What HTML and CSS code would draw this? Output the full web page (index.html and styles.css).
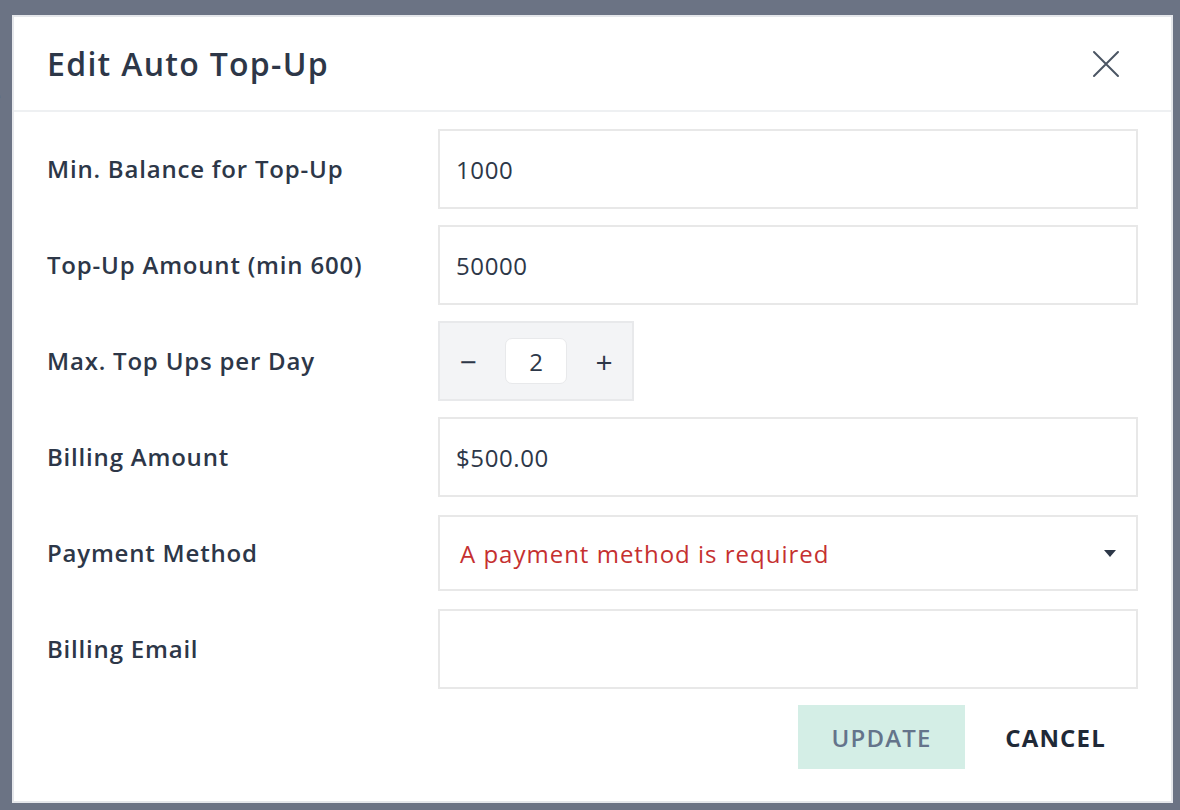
FILE: index.html
```html
<!DOCTYPE html>
<html lang="en">
<head>
<meta charset="UTF-8">
<title>Edit Auto Top-Up</title>
<link rel="stylesheet" href="styles.css">
</head>
<body>

<div class="page-behind">
    <span class="behind-text">Usage</span>
</div>

<div class="overlay">
    <div class="modal">
        <div class="modal-header">
            <h2 class="modal-title">Edit Auto Top-Up</h2>
            <button class="close-button" aria-label="Close">
                <svg width="28" height="28" viewBox="0 0 28 28">
                    <path d="M2 2 L26 26 M26 2 L2 26" stroke="#4b5563" stroke-width="2" stroke-linecap="round" fill="none"/>
                </svg>
            </button>
        </div>

        <form class="modal-body">
            <label class="field-label" for="minBalance">Min. Balance for Top-Up</label>
            <input class="text-input" type="text" id="minBalance" value="1000">

            <label class="field-label" for="topUpAmount">Top-Up Amount (min 600)</label>
            <input class="text-input" type="text" id="topUpAmount" value="50000">

            <label class="field-label" for="maxTopUps">Max. Top Ups per Day</label>
            <div class="stepper">
                <button type="button" class="stepper-button">&minus;</button>
                <input class="stepper-value" type="text" id="maxTopUps" value="2">
                <button type="button" class="stepper-button">+</button>
            </div>

            <label class="field-label" for="billingAmount">Billing Amount</label>
            <input class="text-input" type="text" id="billingAmount" value="$500.00">

            <label class="field-label" for="paymentMethod">Payment Method</label>
            <div class="select-box" id="paymentMethod">
                <span class="select-error">A payment method is required</span>
                <svg class="select-arrow" width="12" height="7" viewBox="0 0 12 7">
                    <path d="M0 0 H12 L6 7 Z" fill="#2d3748"/>
                </svg>
            </div>

            <label class="field-label" for="billingEmail">Billing Email</label>
            <input class="text-input" type="text" id="billingEmail" value="">
        </form>

        <div class="modal-footer">
            <button class="update-button" disabled>UPDATE</button>
            <button class="cancel-button">CANCEL</button>
        </div>
    </div>
</div>

</body>
</html>
```

FILE: styles.css
```css
body {
    margin: 0;
    font-family: "Open Sans", "Noto Sans", Arial, sans-serif;
    color: #2d3748;
    background-color: #6b7384;
    width: 1180px;
    height: 810px;
    overflow: hidden;
    position: relative;
}

.page-behind {
    position: absolute;
    left: -62px;
    top: 80px;
}

.behind-text {
    font-size: 22px;
    color: #4c5466;
}

.overlay {
    position: absolute;
    inset: 0;
    padding: 15px 0 0 12px;
}

.modal {
    width: 1161px;
    height: 788px;
    box-sizing: border-box;
    background: white;
    border: 2px solid #e5e7eb;
    display: flex;
    flex-direction: column;
}

.modal-header {
    height: 95px;
    box-sizing: border-box;
    border-bottom: 2px solid #eef0f2;
    display: flex;
    align-items: center;
    justify-content: space-between;
    padding: 0 51px 0 33px;
}

.modal-title {
    margin: 0;
    font-size: 32px;
    font-weight: 600;
    color: #2d3748;
    letter-spacing: 1.3px;
}

.close-button {
    background: none;
    border: none;
    padding: 0;
    width: 28px;
    height: 28px;
    cursor: pointer;
}

.modal-body {
    display: grid;
    grid-template-columns: 391px 700px;
    row-gap: 16px;
    padding: 17px 33px 0 33px;
    align-items: center;
}

.field-label {
    font-size: 24px;
    font-weight: 600;
    color: #2d3748;
    letter-spacing: 0.8px;
    padding-bottom: 2px;
}

.text-input {
    height: 80px;
    box-sizing: border-box;
    border: 2px solid #e8e8e8;
    padding: 0 16px;
    font-family: inherit;
    font-size: 24px;
    color: #2d3748;
    letter-spacing: 0.6px;
    outline: none;
}

.stepper {
    width: 196px;
    height: 80px;
    box-sizing: border-box;
    background-color: #f3f4f6;
    border: 2px solid #e8e9eb;
    display: flex;
    align-items: center;
    justify-content: space-between;
    padding: 0 12px;
}

.stepper-button {
    width: 32px;
    height: 40px;
    border: none;
    background: none;
    font-family: inherit;
    font-size: 30px;
    color: #2d3748;
    cursor: pointer;
    padding: 0;
}

.stepper-value {
    width: 62px;
    height: 46px;
    box-sizing: border-box;
    border: 1px solid #e8e9eb;
    border-radius: 7px;
    background: white;
    text-align: center;
    font-family: inherit;
    font-size: 24px;
    color: #2d3748;
    outline: none;
}

.select-box {
    height: 76px;
    margin: 2px 0;
    box-sizing: border-box;
    border: 2px solid #e8e8e8;
    padding: 0 20px 0 20px;
    display: flex;
    align-items: center;
    justify-content: space-between;
}

.select-error {
    font-size: 24px;
    color: #c53030;
    letter-spacing: 1px;
}

.modal-footer {
    display: flex;
    justify-content: flex-end;
    gap: 8px;
    padding: 16px 33px 0 33px;
}

.update-button {
    width: 167px;
    height: 64px;
    border: none;
    background-color: #d4eee6;
    color: #64748b;
    font-family: inherit;
    font-size: 24px;
    font-weight: 600;
    letter-spacing: 1.2px;
}

.cancel-button {
    height: 64px;
    border: none;
    background: none;
    padding: 0 32px;
    color: #1f2937;
    font-family: inherit;
    font-size: 24px;
    font-weight: 700;
    letter-spacing: 1.2px;
    cursor: pointer;
}
```
